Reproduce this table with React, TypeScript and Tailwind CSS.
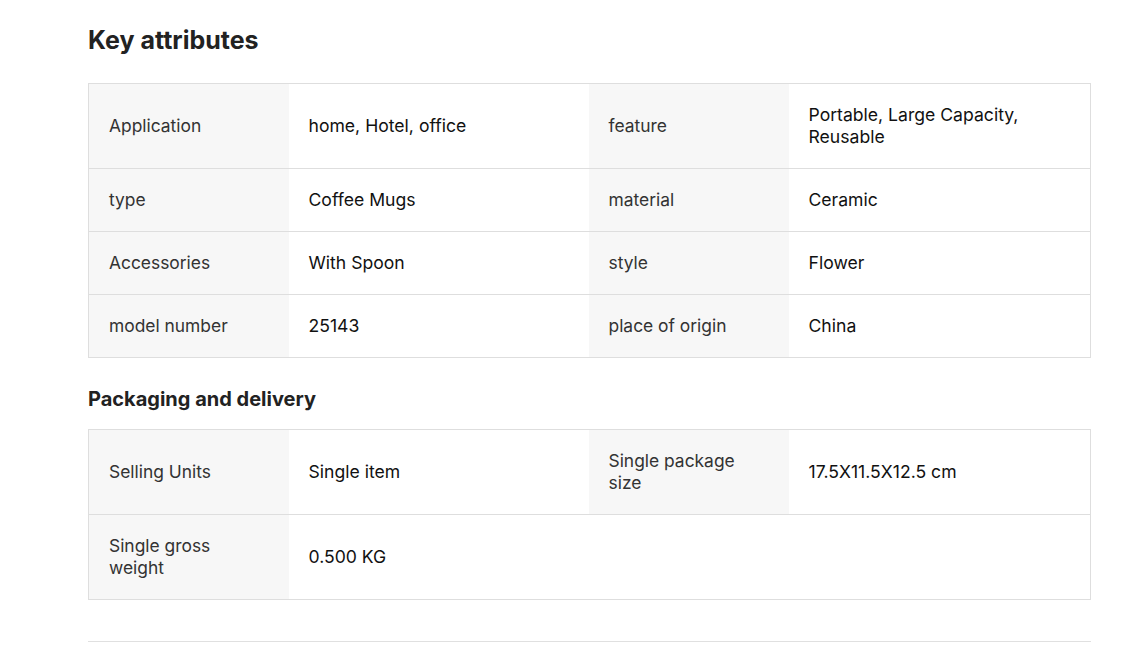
import React from "react";

type Pair = [string, string];

const key: Pair[][] = [
  [["Application", "home, Hotel, office"], ["feature", "Portable, Large Capacity, Reusable"]],
  [["type", "Coffee Mugs"], ["material", "Ceramic"]],
  [["Accessories", "With Spoon"], ["style", "Flower"]],
  [["model number", "25143"], ["place of origin", "China"]],
];

const pack: Pair[][] = [
  [["Selling Units", "Single item"], ["Single package size", "17.5X11.5X12.5 cm"]],
  [["Single gross weight", "0.500 KG"]],
];

function Table({ rows }: { rows: Pair[][] }) {
  return (
    <table className="w-full table-fixed border-collapse border border-[#dedede]">
      <colgroup>
        <col className="w-[200px]" />
        <col className="w-[300px]" />
        <col className="w-[200px]" />
        <col />
      </colgroup>
      <tbody>
        {rows.map((row, i) => (
          <tr key={i} className="border-b border-[#dedede]">
            {row.map(([k, v], j) => (
              <React.Fragment key={j}>
                <td className="bg-[#f7f7f7] px-5 py-5 align-middle text-[17.4px] leading-[22px] text-[#333]">{k}</td>
                <td className="bg-white px-5 py-5 align-middle text-[17.6px] leading-[22px] text-[#111]">{v}</td>
              </React.Fragment>
            ))}
            {row.length === 1 && <td colSpan={2} className="bg-white"></td>}
          </tr>
        ))}
      </tbody>
    </table>
  );
}

export default function App() {
  return (
    <div className="min-h-[654px] bg-white" style={{ fontFamily: "Inter, 'Noto Sans', sans-serif" }}>
      <div className="ml-[88px] w-[1003px] pt-[24px]">
        <h1 className="mb-[27px] text-[25px] font-bold leading-[32px] text-[#222]">Key attributes</h1>
        <Table rows={key} />
        <h2 className="mt-[27px] mb-[16px] text-[20px] font-bold leading-[28px] text-[#222]">Packaging and delivery</h2>
        <Table rows={pack} />
        <div className="mt-[41px] h-px bg-[#e0e0e0]" />
      </div>
    </div>
  );
}
